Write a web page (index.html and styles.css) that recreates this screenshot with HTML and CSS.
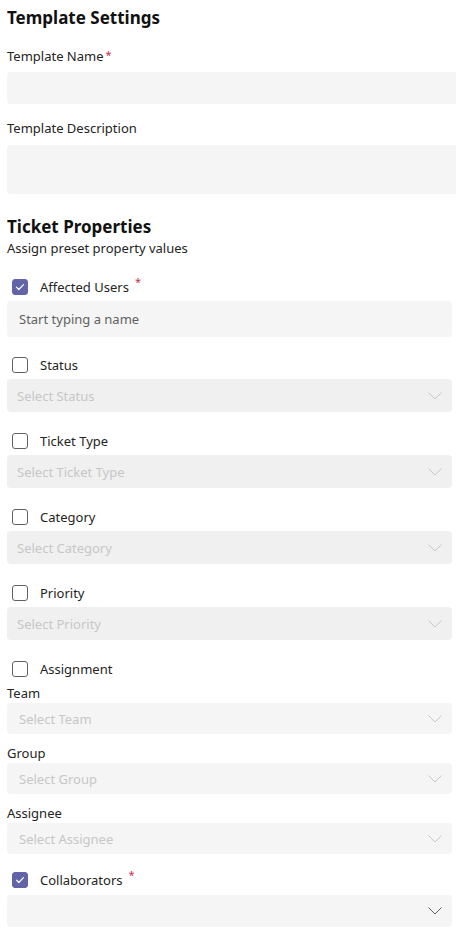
FILE: index.html
```html
<!DOCTYPE html>
<html lang="en">
<head>
<meta charset="utf-8">
<title>Template Settings</title>
<link rel="stylesheet" href="styles.css">
</head>
<body>
<div class="page">
  <section class="settings">
    <h2 class="title">Template Settings</h2>
    <label class="field-label">Template Name<span class="req-inline">*</span></label>
    <div class="text-input"></div>
    <label class="field-label desc-label">Template Description</label>
    <div class="text-area"></div>
  </section>

  <section class="props">
    <h2 class="title props-title">Ticket Properties</h2>
    <p class="subtitle">Assign preset property values</p>

    <div class="check-row first">
      <span class="box checked"><svg viewBox="0 0 16 16" width="16" height="16"><path d="M4.5 8.2l2.3 2.3 4.7-4.9" fill="none" stroke="#fff" stroke-width="1.2" stroke-linecap="round" stroke-linejoin="round"/></svg></span>
      <span class="check-label">Affected Users</span><span class="req">*</span>
    </div>
    <div class="picker">Start typing a name</div>

    <div class="check-row after-picker">
      <span class="box"></span><span class="check-label">Status</span>
    </div>
    <div class="dropdown disabled"><span>Select Status</span><svg class="chev" viewBox="0 0 14 8" width="14" height="8"><path d="M0.5 0.5l6.5 6.5 6.5-6.5" fill="none" stroke="currentColor" stroke-width="1"/></svg></div>

    <div class="check-row">
      <span class="box"></span><span class="check-label">Ticket Type</span>
    </div>
    <div class="dropdown disabled"><span>Select Ticket Type</span><svg class="chev" viewBox="0 0 14 8" width="14" height="8"><path d="M0.5 0.5l6.5 6.5 6.5-6.5" fill="none" stroke="currentColor" stroke-width="1"/></svg></div>

    <div class="check-row">
      <span class="box"></span><span class="check-label">Category</span>
    </div>
    <div class="dropdown disabled"><span>Select Category</span><svg class="chev" viewBox="0 0 14 8" width="14" height="8"><path d="M0.5 0.5l6.5 6.5 6.5-6.5" fill="none" stroke="currentColor" stroke-width="1"/></svg></div>

    <div class="check-row">
      <span class="box"></span><span class="check-label">Priority</span>
    </div>
    <div class="dropdown disabled"><span>Select Priority</span><svg class="chev" viewBox="0 0 14 8" width="14" height="8"><path d="M0.5 0.5l6.5 6.5 6.5-6.5" fill="none" stroke="currentColor" stroke-width="1"/></svg></div>

    <div class="check-row">
      <span class="box"></span><span class="check-label">Assignment</span>
    </div>
    <div class="sub-label first-sub">Team</div>
    <div class="dropdown sub"><span>Select Team</span><svg class="chev" viewBox="0 0 14 8" width="14" height="8"><path d="M0.5 0.5l6.5 6.5 6.5-6.5" fill="none" stroke="currentColor" stroke-width="1"/></svg></div>
    <div class="sub-label">Group</div>
    <div class="dropdown sub"><span>Select Group</span><svg class="chev" viewBox="0 0 14 8" width="14" height="8"><path d="M0.5 0.5l6.5 6.5 6.5-6.5" fill="none" stroke="currentColor" stroke-width="1"/></svg></div>
    <div class="sub-label">Assignee</div>
    <div class="dropdown sub"><span>Select Assignee</span><svg class="chev" viewBox="0 0 14 8" width="14" height="8"><path d="M0.5 0.5l6.5 6.5 6.5-6.5" fill="none" stroke="currentColor" stroke-width="1"/></svg></div>

    <div class="check-row collab">
      <span class="box checked"><svg viewBox="0 0 16 16" width="16" height="16"><path d="M4.5 8.2l2.3 2.3 4.7-4.9" fill="none" stroke="#fff" stroke-width="1.2" stroke-linecap="round" stroke-linejoin="round"/></svg></span>
      <span class="check-label">Collaborators</span><span class="req">*</span>
    </div>
    <div class="dropdown active"><span></span><svg class="chev" viewBox="0 0 14 8" width="14" height="8"><path d="M0.5 0.5l6.5 6.5 6.5-6.5" fill="none" stroke="currentColor" stroke-width="1"/></svg></div>
  </section>
</div>
</body>
</html>
```
FILE: styles.css
```css
html, body {
  margin: 0;
  padding: 0;
  background: #fff;
}
body {
  font-family: "Noto Sans", "Open Sans", sans-serif;
  font-size: 13px;
  color: #242424;
  width: 456px;
  overflow: hidden;
}
.page {
  padding: 6px 4px 0 7px;
}
.settings {
  display: flex;
  flex-direction: column;
  margin-right: -8px;
}
.title {
  margin: 0;
  font-size: 17px;
  font-weight: 700;
  line-height: 24px;
  color: #111;
}
.field-label {
  display: block;
  margin-top: 16px;
  height: 20px;
  line-height: 20px;
  font-size: 13px;
}
.desc-label {
  margin-top: 14px;
}
.req-inline {
  color: #c4314b;
  margin-left: 2px;
  font-size: 11px;
  line-height: 0;
  vertical-align: 2px;
}
.text-input {
  margin-top: 6px;
  height: 32px;
  background: #f5f5f5;
  border-radius: 4px 0 0 4px;
}
.text-area {
  margin-top: 7px;
  height: 49px;
  background: #f5f5f5;
  border-radius: 4px 0 0 4px;
}
.props {
  display: flex;
  flex-direction: column;
}
.props-title {
  margin-top: 22px;
  line-height: 22px;
}
.subtitle {
  margin: 0;
  font-size: 13px;
  line-height: 20px;
}
.check-row {
  display: flex;
  align-items: center;
  height: 20px;
  margin-top: 19px;
  padding-left: 5px;
  font-size: 13px;
}
.check-row.after-picker {
  margin-top: 18px;
}
.check-row.collab {
  margin-top: 16px;
}
.box {
  width: 16px;
  height: 16px;
  box-sizing: border-box;
  border: 1px solid #616161;
  border-radius: 3px;
  background: #fff;
  display: inline-flex;
  flex: none;
}
.box.checked {
  background: #6264a7;
  border-color: #6264a7;
}
.box svg {
  margin: -1px;
}
.check-label {
  margin-left: 12px;
}
.req {
  color: #c4314b;
  margin-left: 6px;
  align-self: flex-start;
  margin-top: -3px;
  font-size: 11px;
}
.picker {
  margin-top: 4px;
  height: 36px;
  line-height: 36px;
  background: #f5f5f5;
  border-radius: 4px;
  padding-left: 12px;
  color: #616161;
  font-size: 13px;
}
.dropdown {
  margin-top: 4px;
  height: 33px;
  display: flex;
  align-items: center;
  justify-content: space-between;
  padding: 0 10px;
  border-radius: 4px;
  font-size: 13px;
}
.dropdown.disabled {
  background: #f0f0f0;
  color: #c7c7c7;
}
.dropdown.sub {
  margin-top: 0;
  height: 31px;
  background: #f5f5f5;
  color: #c7c7c7;
  padding-left: 12px;
}
.dropdown.active {
  margin-top: 5px;
  height: 32px;
  background: #f5f5f5;
  color: #616161;
}
.chev {
  flex: none;
}
.sub-label {
  margin-top: 9px;
  line-height: 20px;
  font-size: 13px;
}
.sub-label.first-sub {
  margin-top: 4px;
}
```
